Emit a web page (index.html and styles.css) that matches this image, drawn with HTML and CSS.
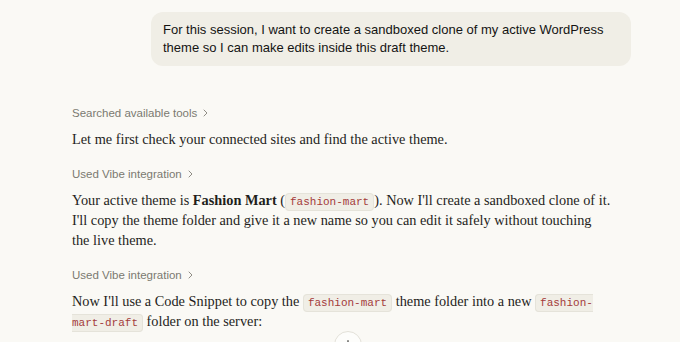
FILE: index.html
```html
<!DOCTYPE html>
<html lang="en">
<head>
<meta charset="utf-8">
<title>Chat</title>
<link rel="stylesheet" href="styles.css">
</head>
<body>
<main class="thread">
  <div class="user-row">
    <div class="bubble">For this session, I want to create a sandboxed clone of my active WordPress theme so I can make edits inside this draft theme.</div>
  </div>
  <section class="reply">
    <div class="tool">Searched available tools <svg class="chev" width="5" height="8" viewBox="0 0 5 8" fill="none" stroke="#8f8d85" stroke-width="1" stroke-linecap="round" stroke-linejoin="round"><path d="M1 1l3 3-3 3"/></svg></div>
    <p class="text">Let me first check your connected sites and find the active theme.</p>
    <div class="tool">Used Vibe integration <svg class="chev" width="5" height="8" viewBox="0 0 5 8" fill="none" stroke="#8f8d85" stroke-width="1" stroke-linecap="round" stroke-linejoin="round"><path d="M1 1l3 3-3 3"/></svg></div>
    <p class="text">Your active theme is <strong>Fashion Mart</strong> (<code>fashion-mart</code>). Now I'll create a sandboxed clone of it. I'll copy the theme folder and give it a new name so you can edit it safely without touching the live theme.</p>
    <div class="tool">Used Vibe integration <svg class="chev" width="5" height="8" viewBox="0 0 5 8" fill="none" stroke="#8f8d85" stroke-width="1" stroke-linecap="round" stroke-linejoin="round"><path d="M1 1l3 3-3 3"/></svg></div>
    <p class="text">Now I'll use a Code Snippet to copy the <code>fashion-mart</code> theme folder into a new <code>fashion-mart-draft</code> folder on the server:</p>
  </section>
</main>
<button class="scroll-btn" aria-label="Scroll down">
  <svg width="12" height="12" viewBox="0 0 12 12" fill="none" stroke="#3d3d3a" stroke-width="1.2" stroke-linecap="round" stroke-linejoin="round"><path d="M6 1.5v8.5M2.5 6.8 6 10.2l3.5-3.4"/></svg>
</button>
</body>
</html>
```
FILE: styles.css
```css
html, body {
  margin: 0;
  padding: 0;
  background: #faf9f5;
  height: 100%;
  overflow: hidden;
}
.thread {
  padding: 12px 0 0 72px;
  width: 540px;
}
.user-row {
  display: flex;
  justify-content: flex-end;
  margin-right: -19px;
  margin-left: 79px;
}
.bubble {
  background: #f0eee6;
  border-radius: 12px;
  padding: 9px 12px 9px 12px;
  font-family: "Liberation Sans", Arial, sans-serif;
  font-size: 13px;
  line-height: 18px;
  color: #141413;
  width: 100%;
}
.reply {
  margin-top: 39px;
}
.tool {
  font-family: "Liberation Sans", Arial, sans-serif;
  font-size: 11.5px;
  color: #7b7971;
  line-height: 16px;
  margin: 0 0 8px 0;
  display: flex;
  align-items: center;
  gap: 6px;
}
.text {
  font-family: "Liberation Serif", "Times New Roman", serif;
  font-size: 14.3px;
  line-height: 20px;
  color: #1f1e1b;
  margin: 0 0 17px 0;
}
.text strong { font-weight: 700; }
code {
  font-family: "Liberation Mono", "DejaVu Sans Mono", monospace;
  font-size: 11px;
  line-height: 1;
  color: #a43b3b;
  background: #f0eee6;
  border: 1px solid #e5e3da;
  border-radius: 4px;
  padding: 2px 4px;
}
.scroll-btn {
  position: absolute;
  left: 334px;
  top: 331px;
  width: 28px;
  height: 28px;
  border-radius: 50%;
  background: #fdfdfb;
  border: 1px solid #e3e1d9;
  display: flex;
  align-items: center;
  justify-content: center;
  padding: 0;
}
```
